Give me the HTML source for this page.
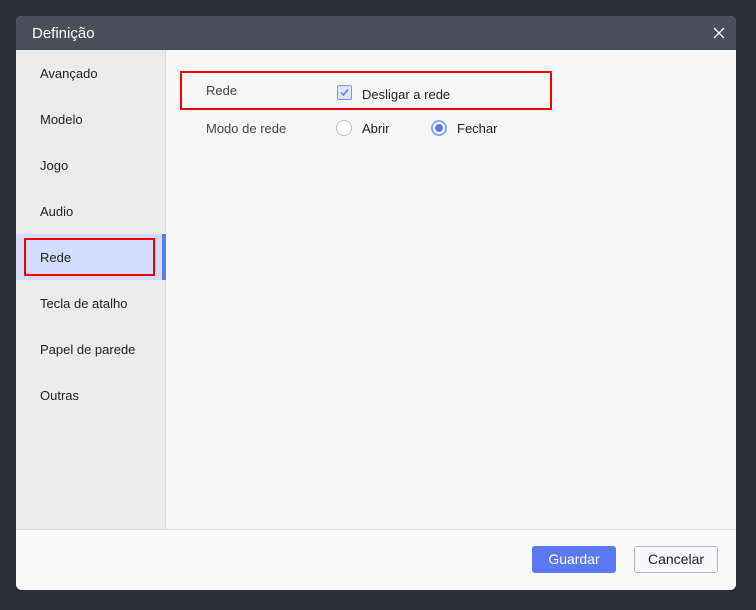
<!DOCTYPE html>
<html><head><style>
body{margin:0;width:756px;height:610px;background:#2b2e38;font-family:"Liberation Sans",sans-serif;position:relative;overflow:hidden}
.dlg{position:absolute;left:16px;top:16px;width:720px;height:574px;background:#f7f7f7;border-radius:6px;overflow:hidden}
.hd{position:absolute;left:0;top:0;width:720px;height:34px;background:#4a4f5c;color:#fff;font-size:15px}
.hd span{position:absolute;left:16px;top:9px}
.side{position:absolute;left:0;top:34px;width:149px;height:479px;background:#ebebeb;border-right:1px solid #dcdcdc}
.it{position:absolute;left:24px;font-size:13px;color:#222}
.sel{position:absolute;left:0;top:218px;width:150px;height:46px;background:#d3dcfd}
.bar{position:absolute;left:146px;top:218px;width:4px;height:46px;background:#5b78f6}
.ft{position:absolute;left:0;top:513px;width:720px;height:61px;background:#fafafa;border-top:1px solid #ddd}
.t{position:absolute;font-size:13px;color:#333}
.btn{position:absolute;top:530px;height:27px;border-radius:3px;font-size:14px;text-align:center;line-height:27px;box-sizing:border-box}
</style></head><body>
<div class="dlg">
<div class="hd"><span>Definição</span>
<svg style="position:absolute;left:697px;top:11px" width="12" height="12"><path d="M1 1L11 11M11 1L1 11" stroke="#fff" stroke-width="1.3"/></svg></div>
<div class="side"></div>
<div class="sel"></div><div class="bar"></div>
<div style="position:absolute;left:8px;top:222px;width:127px;height:34px;border:2px solid #e00"></div>
<div class="it" style="top:50px">Avançado</div>
<div class="it" style="top:96px">Modelo</div>
<div class="it" style="top:142px">Jogo</div>
<div class="it" style="top:188px">Audio</div>
<div class="it" style="top:234px">Rede</div>
<div class="it" style="top:280px">Tecla de atalho</div>
<div class="it" style="top:326px">Papel de parede</div>
<div class="it" style="top:372px">Outras</div>
<div style="position:absolute;left:164px;top:55px;width:368px;height:35px;border:2px solid #e00"></div>
<div class="t" style="left:190px;top:67px;color:#444">Rede</div>
<div style="position:absolute;left:321px;top:69px;width:13px;height:13px;border:1px solid #7d93e8;border-radius:2px;background:#dfe5fb"></div>
<svg style="position:absolute;left:322px;top:70px" width="13" height="13"><path d="M3 6.5L5.5 9L10 3.5" stroke="#5b78f6" stroke-width="1.5" fill="none"/></svg>
<div class="t" style="left:346px;top:71px;color:#222">Desligar a rede</div>
<div class="t" style="left:190px;top:105px;color:#444">Modo de rede</div>
<div style="position:absolute;left:320px;top:104px;width:14px;height:14px;border:1px solid #bbb;border-radius:50%;background:#fff"></div>
<div class="t" style="left:346px;top:105px;color:#222">Abrir</div>
<div style="position:absolute;left:415px;top:104px;width:12px;height:12px;border:2px solid #8ea2f3;border-radius:50%;background:#fff"></div>
<div style="position:absolute;left:419px;top:108px;width:8px;height:8px;border-radius:50%;background:#5b78f6"></div>
<div class="t" style="left:441px;top:105px;color:#222">Fechar</div>
<div class="ft"></div>
<div class="btn" style="left:516px;width:84px;background:#5b78f6;color:#fff">Guardar</div>
<div class="btn" style="left:618px;width:84px;background:#f7f8fc;border:1px solid #bbb;color:#222;line-height:25px">Cancelar</div>
</div>
</body></html>
